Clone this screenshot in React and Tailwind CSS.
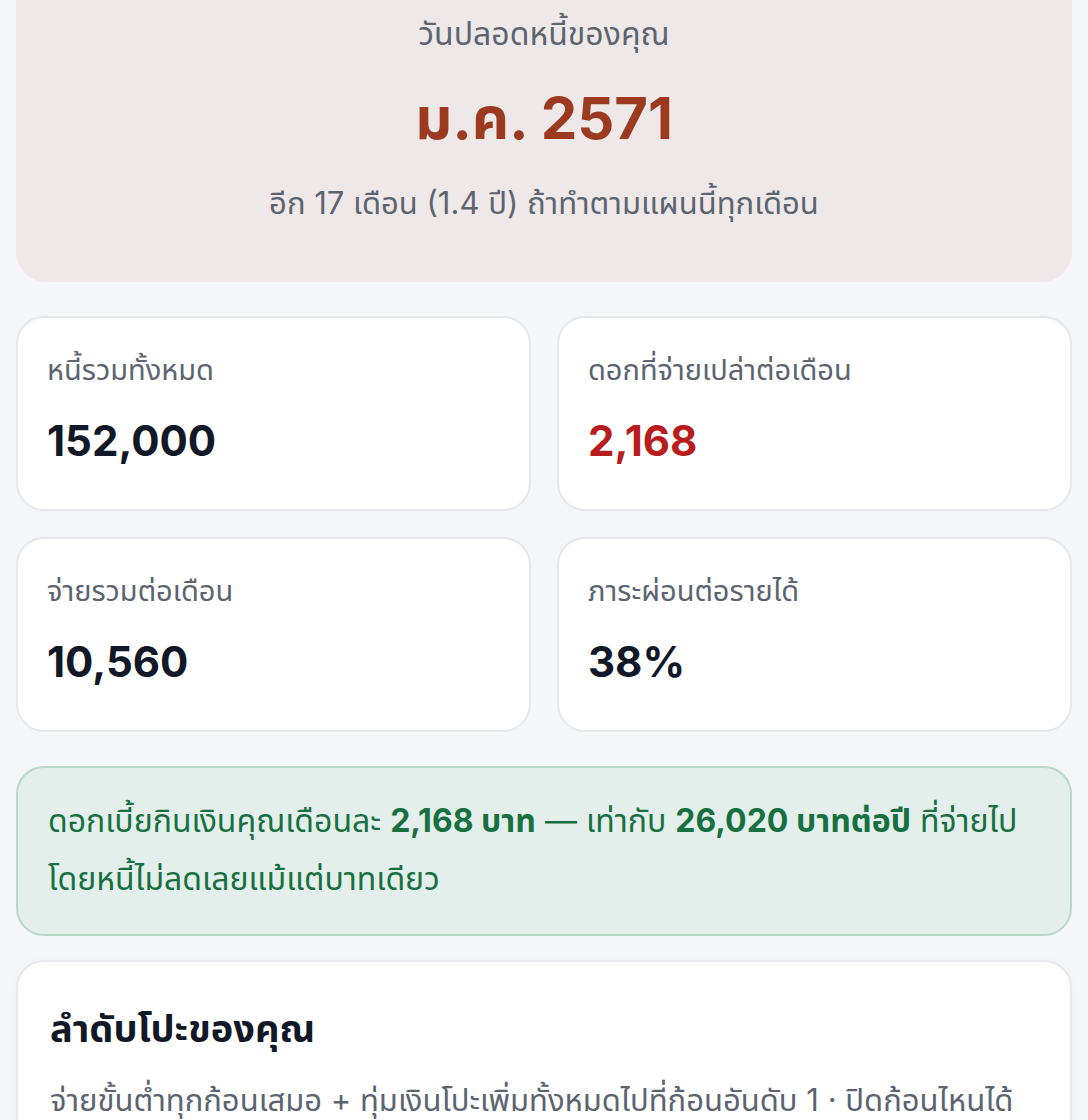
const stats = [
  { label: 'หนี้รวมทั้งหมด', value: '152,000', tone: 'text-[#111827]' },
  { label: 'ดอกที่จ่ายเปล่าต่อเดือน', value: '2,168', tone: 'text-[#b91c1c]' },
  { label: 'จ่ายรวมต่อเดือน', value: '10,560', tone: 'text-[#111827]' },
  { label: 'ภาระผ่อนต่อรายได้', value: '38%', tone: 'text-[#111827]' },
]

function StatCard({ label, value, tone }) {
  return (
    <div className="h-[195px] rounded-[28px] border-2 border-[#e5e7eb] bg-white px-[29px] pt-[30px]">
      <div className="text-[29px] leading-[44px] text-[#5b6470]">{label}</div>
      <div className={`mt-[23px] text-[42px] font-bold leading-[52px] ${tone}`}>{value}</div>
    </div>
  )
}

export default function App() {
  return (
    <div
      className="min-h-[1120px] overflow-hidden bg-[#f5f6f8] px-4"
      style={{ fontFamily: 'Inter, "Noto Sans Thai", "Noto Sans", sans-serif' }}
    >
      {/* hero: debt-free date */}
      <div className="flex h-[282px] flex-col items-center rounded-b-[30px] bg-[#efe8e8] pt-[10px] text-center">
        <div className="text-[32px] leading-[48px] text-[#5b6470]">วันปลอดหนี้ของคุณ</div>
        <div className="mt-[22px] text-[58px] font-bold leading-[76px] text-[#9c3a1f]">ม.ค. 2571</div>
        <div className="mt-[24px] text-[31px] leading-[46px] text-[#5b6470]">
          อีก 17 เดือน (1.4 ปี) ถ้าทำตามแผนนี้ทุกเดือน
        </div>
      </div>

      <div className="mt-[34px] grid grid-cols-2 gap-x-[26px] gap-y-[26px]">
        {stats.map((s) => (
          <StatCard key={s.label} {...s} />
        ))}
      </div>

      <div className="mt-[34px] rounded-[28px] border-2 border-[#b6d9c9] bg-[#e4efeb] px-[30px] pb-[26px] pt-[24px] text-[32px] leading-[58px] text-[#16703f]">
        ดอกเบี้ยกินเงินคุณเดือนละ <b>2,168 บาท</b> — เท่ากับ <b>26,020 บาทต่อปี</b> ที่จ่ายไป
        <br />
        โดยหนี้ไม่ลดเลยแม้แต่บาทเดียว
      </div>

      <div className="mt-[24px] rounded-[28px] border-2 border-[#e8eaee] bg-white px-[32px] pt-[40px] pb-[40px] shadow-[0_2px_8px_rgba(0,0,0,0.04)]">
        <div className="text-[38px] font-bold leading-[52px] text-[#111827]">ลำดับโปะของคุณ</div>
        <div className="mt-[22px] text-[31px] leading-[48px] text-[#5b6470]">
          จ่ายขั้นต่ำทุกก้อนเสมอ + ทุ่มเงินโปะเพิ่มทั้งหมดไปที่ก้อนอันดับ 1 · ปิดก้อนไหนได้
          <br />
          ก็เอาเงินที่เคยจ่ายก้อนนั้นไปโปะก้อนถัดไป
        </div>
      </div>
    </div>
  )
}
